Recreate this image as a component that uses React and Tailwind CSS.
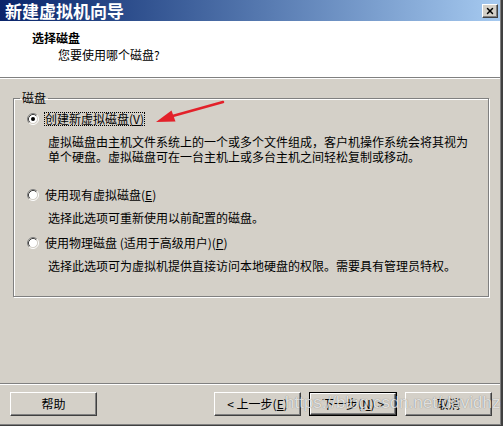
import { X } from "lucide-react";

function Radio({ checked }) {
  return (
    <svg width="12" height="12" viewBox="0 0 12 12" className="shrink-0">
      <circle cx="6" cy="6" r="4.5" fill="#fff" />
      <path d="M2.11 9.89 A5.5 5.5 0 0 1 9.89 2.11" fill="none" stroke="#808080" />
      <path d="M9.89 2.11 A5.5 5.5 0 0 1 2.11 9.89" fill="none" stroke="#fff" />
      <path d="M2.82 9.18 A4.5 4.5 0 0 1 9.18 2.82" fill="none" stroke="#404040" />
      <path d="M9.18 2.82 A4.5 4.5 0 0 1 2.82 9.18" fill="none" stroke="#d4d0c8" />
      {checked && <circle cx="6" cy="6" r="2" fill="#000" />}
    </svg>
  );
}

function Btn({ children, def }) {
  const inner = (
    <div
      className="
        flex
        h-full
        w-full
        items-center
        justify-center
        border
        border-t-white
        border-l-white
        border-r-[#404040]
        border-b-[#404040]
        bg-[#d4d0c8]
        shadow-[inset_-1px_-1px_0_#808080]
      "
    >
      {children}
    </div>
  );

  if (def) {
    return <div className="h-[24px] w-[88px] border border-black">{inner}</div>;
  }
  return <div className="h-[24px] w-[87px]">{inner}</div>;
}

function Option({ checked, focus, children }) {
  return (
    <div className="flex h-[16px] items-center pl-[13px]">
      <Radio checked={checked} />
      <span
        className={`ml-[5px] border px-0 leading-[12px] ${
          focus ? "border-dotted border-black" : "border-transparent"
        }`}
      >
        {children}
      </span>
    </div>
  );
}

export default function App() {
  return (
    <div
      className="
        relative
        h-[426px]
        w-[503px]
        overflow-hidden
        border-r-2
        border-b
        border-[#404040]
        bg-[#d4d0c8]
        font-['Noto_Sans_CJK_SC',sans-serif]
        text-[12px]
        text-black
      "
    >
      <div className="flex h-full flex-col border-r border-b border-[#808080]">

        {/* TITLE BAR */}

        <div className="flex h-[21px] shrink-0 items-center justify-between bg-linear-to-r from-[#0a246a] to-[#a6caf0] pl-[5px] pr-[2px]">
          <span className="text-[17px] font-bold leading-[21px] text-white">
            新建虚拟机向导
          </span>
          <div className="flex h-[14px] w-[16px] items-center justify-center border border-t-white border-l-white border-r-[#404040] border-b-[#404040] bg-[#d4d0c8] shadow-[inset_-1px_-1px_0_#808080]">
            <X size={10} strokeWidth={3.5} className="text-black" />
          </div>
        </div>

        {/* HEADER */}

        <div className="h-[56px] shrink-0 bg-white pt-[9px]">
          <p className="pl-[32px] font-bold leading-[16px]">选择磁盘</p>
          <p className="mt-[1px] pl-[58px] leading-[16px]">您要使用哪个磁盘?</p>
        </div>

        <div className="h-[2px] shrink-0 border-t border-b border-t-[#808080] border-b-white" />

        {/* BODY */}

        <div className="h-[304px] shrink-0">
          <fieldset className="ml-[13px] mt-[11px] h-[207px] w-[476px] border border-[#808080] shadow-[1px_1px_0_#fff,inset_1px_1px_0_#fff]">
            <legend className="ml-[6px] px-[2px] leading-[16px]">磁盘</legend>

            <div className="mt-[5px]">
              <Option checked focus>
                创建新虚拟磁盘(<u>V</u>)
              </Option>
            </div>
            <p className="mt-[7px] pl-[34px] leading-[15px]">
              虚拟磁盘由主机文件系统上的一个或多个文件组成，客户机操作系统会将其视为
              <br />
              单个硬盘。虚拟磁盘可在一台主机上或多台主机之间轻松复制或移动。
            </p>

            <div className="mt-[23px]">
              <Option>
                使用现有虚拟磁盘(<u>E</u>)
              </Option>
            </div>
            <p className="mt-[7px] pl-[34px] leading-[16px]">
              选择此选项可重新使用以前配置的磁盘。
            </p>

            <div className="mt-[9px]">
              <Option>
                使用物理磁盘 (适用于高级用户)(<u>P</u>)
              </Option>
            </div>
            <p className="mt-[7px] pl-[34px] leading-[16px]">
              选择此选项可为虚拟机提供直接访问本地硬盘的权限。需要具有管理员特权。
            </p>
          </fieldset>
        </div>

        <div className="h-[2px] shrink-0 border-t border-b border-t-[#808080] border-b-white" />

        {/* BUTTONS */}

        <div className="flex flex-1 items-start pl-[10px] pr-[8px] pt-[7px]">
          <Btn>帮助</Btn>
          <div className="ml-auto flex gap-[8px]">
            <Btn>
              &lt; 上一步(<u>E</u>)
            </Btn>
            <Btn def>
              下一步(<u>N</u>) &gt;
            </Btn>
            <Btn>取消</Btn>
          </div>
        </div>
      </div>

      {/* RED ARROW */}

      <svg
        width="80"
        height="32"
        viewBox="0 0 80 32"
        className="pointer-events-none absolute left-[151px] top-[96px]"
      >
        <line x1="72" y1="6" x2="18" y2="21" stroke="#e3212a" strokeWidth="2.5" strokeLinecap="round" />
        <polygon points="5,26 20.5,14.5 24.5,25.5" fill="#e3212a" />
      </svg>

      {/* WATERMARK */}

      <span className="pointer-events-none absolute left-[285px] top-[393px] font-['Liberation_Sans',sans-serif] text-[17px] leading-[20px] text-white/75 [text-shadow:0_0_1px_rgba(0,0,0,0.45)]">
        https://blog.csdn.net/davidhzq
      </span>
    </div>
  );
}
